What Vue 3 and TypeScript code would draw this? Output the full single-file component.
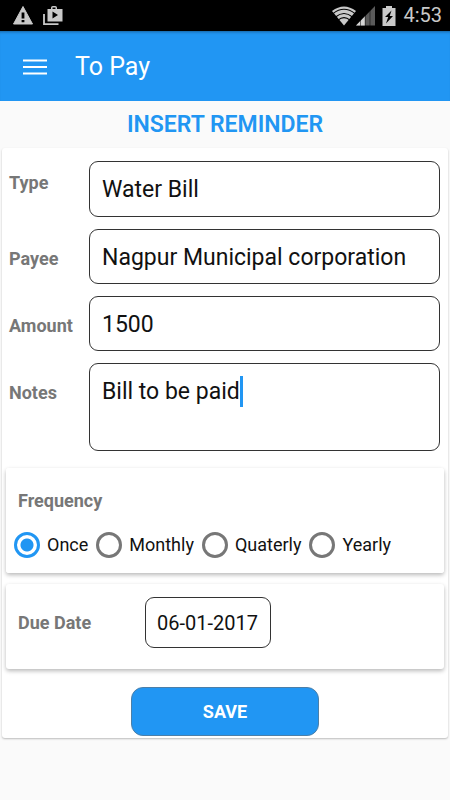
<script setup lang="ts">
import { ref } from 'vue'

interface Field {
  id: 'type' | 'payee' | 'amount'
  label: string
}

const fields: Field[] = [
  { id: 'type', label: 'Type' },
  { id: 'payee', label: 'Payee' },
  { id: 'amount', label: 'Amount' },
]

const form = ref({
  type: 'Water Bill',
  payee: 'Nagpur Municipal corporation',
  amount: '1500',
  notes: 'Bill to be paid',
})

const frequencies: string[] = ['Once', 'Monthly', 'Quaterly', 'Yearly']
const frequency = ref<string>('Once')
const dueDate = ref<string>('06-01-2017')
</script>

<template>
  <div class="screen">
    <div class="status">
      <div class="status-group status-left">
        <svg width="22" height="22" viewBox="0 0 22 22">
          <path d="M11 1.5 20.5 19h-19z" fill="#c9c9c9" stroke="#c9c9c9" stroke-linejoin="round" />
          <path d="M9.6 7.5h2.8v6H9.6zM9.6 15h2.8v2.300H9.6z" fill="#000" />
        </svg>
        <svg width="20" height="22" viewBox="0 0 20 22">
          <path d="M1 9v10.2h14.5" fill="none" stroke="#c9c9c9" stroke-width="1.8" />
          <path
            fill="#c9c9c9"
            fill-rule="evenodd"
            d="M4.5 4H8V2.8Q8 1 9.8 1h2.4Q14 1 14 2.8V4h5.5v12.500h-15zM9.500 4h3V2.500h-3zM9.500 6.500v7l5.500-3.500z"
          />
        </svg>
      </div>
      <div class="status-group status-right">
        <div class="signals">
          <svg width="24" height="20" viewBox="0 0 24 20">
            <path d="M0 5Q12-4 24 5L12 19.5z" fill="#c9c9c9" />
            <path
              d="M1 7.6Q12-1 23 7.600M3.500 11Q12 4 20.500 11M6 14.200Q12 9 18 14.200"
              fill="none"
              stroke="#000"
              stroke-width="1.1"
            />
          </svg>
          <svg width="19" height="20" viewBox="0 0 19 20">
            <path d="M0 19.5 19 0v19.5z" fill="#5a5a5a" />
            <path d="M0 19.5 9 10.3v9.200z" fill="#d5d5d5" />
            <path d="M4.5 0v20M9.2 0v20M14 0v20" stroke="#000" stroke-opacity=".5" />
          </svg>
        </div>
        <svg width="14" height="22" viewBox="0 0 14 22">
          <path d="M4 1h6v2h3.5v18H.5V3H4z" fill="#c9c9c9" />
          <path d="M9.5 5.5 3 12h3.200L4 18.500l7-7.500H7.700z" fill="#000" />
        </svg>
        <span class="clock">4:53</span>
      </div>
    </div>

    <header class="appbar">
      <button class="menu" type="button" aria-label="Menu">
        <svg width="24" height="16" viewBox="0 0 24 16">
          <path d="M0 1.5h24M0 8h24M0 14.5h24" stroke="#fff" stroke-width="2.2" />
        </svg>
      </button>
      <span class="title">To Pay</span>
    </header>

    <main>
      <h1>INSERT REMINDER</h1>
      <form class="card sheet" @submit.prevent>
        <div class="fields">
          <div v-for="f in fields" :key="f.id" class="row" :class="{ 'row-top': f.id === 'type' }">
            <label class="label" :for="f.id">{{ f.label }}</label>
            <input :id="f.id" v-model="form[f.id]" class="box" type="text" />
          </div>
          <div class="row">
            <label class="label" for="notes">Notes</label>
            <div class="box notes">
              <textarea id="notes" v-model="form.notes" rows="1"></textarea>
              <span class="caret"></span>
            </div>
          </div>
        </div>

        <fieldset class="card panel frequency">
          <legend class="label">Frequency</legend>
          <div class="options">
            <label v-for="f in frequencies" :key="f" class="option">
              <input v-model="frequency" type="radio" name="frequency" :value="f" />
              <span>{{ f }}</span>
            </label>
          </div>
        </fieldset>

        <div class="card panel due">
          <label class="label" for="due">Due Date</label>
          <input id="due" v-model="dueDate" class="box date" type="text" />
        </div>

        <button class="save" type="submit">SAVE</button>
      </form>
    </main>
  </div>
</template>

<style>
body {
  margin: 0;
  background: #fafafa;
}
</style>

<style scoped>
.screen {
  min-height: 100vh;
  background: #fafafa;
  color: #111;
  font-family: Roboto, 'Liberation Sans', sans-serif;
}

.screen * {
  box-sizing: border-box;
}

svg {
  display: block;
}

input,
textarea,
button {
  margin: 0;
  font-family: inherit;
  color: inherit;
}

.status {
  display: flex;
  align-items: center;
  justify-content: space-between;
  height: 31px;
  padding: 0 8px 0 12px;
  background: #000;
}

.status-group {
  display: flex;
  align-items: center;
}

.status-left {
  gap: 9px;
}

.status-right {
  gap: 7px;
}

.signals {
  display: flex;
}

.clock {
  color: #c9c9c9;
  font-size: 20px;
  line-height: 31px;
}

.appbar {
  display: flex;
  align-items: center;
  gap: 28px;
  height: 70px;
  padding: 2px 23px 0;
  background: #2196f3;
  box-shadow: inset 0 3px 3px -2px rgba(0, 0, 0, 0.35);
}

.menu {
  padding: 0;
  border: 0;
  background: none;
}

.title {
  color: #fff;
  font-size: 25px;
  line-height: 32px;
}

h1 {
  margin: 0;
  color: #2196f3;
  font-size: 23px;
  font-weight: 600;
  line-height: 47px;
  text-align: center;
}

.card {
  border-radius: 3px;
  background: #fff;
}

.sheet {
  display: flex;
  flex-direction: column;
  margin: 0 2px;
  padding: 13px 4px 2px;
  box-shadow: 0 1px 2px rgba(0, 0, 0, 0.25);
}

.fields {
  display: grid;
  gap: 12px;
  padding: 0 4px 0 3px;
}

.row {
  display: grid;
  grid-template-columns: 80px 1fr;
  align-items: baseline;
}

.row-top {
  align-items: start;
}

.row-top .label {
  padding-top: 10px;
}

.label {
  color: #777;
  font-size: 18px;
  font-weight: 700;
  line-height: 24px;
}

.box {
  width: 100%;
  height: 56px;
  padding: 1px 12px 0;
  border: 1px solid #333;
  border-radius: 9px;
  background: #fff;
  font-size: 23px;
  line-height: 32px;
}

.row + .row .box {
  height: 55px;
}

.row .box.notes {
  display: flex;
  align-items: flex-start;
  height: 88px;
  padding: 12px;
}

.notes textarea {
  field-sizing: content;
  height: 32px;
  padding: 0;
  border: 0;
  outline: 0;
  background: none;
  resize: none;
  overflow: hidden;
  font-size: 23px;
  line-height: 32px;
  caret-color: transparent;
}

.caret {
  width: 3px;
  height: 31px;
  background: #2196f3;
}

.panel {
  box-shadow: 0 2px 4px rgba(0, 0, 0, 0.28);
}

.frequency {
  min-width: 0;
  margin: 17px 0 0;
  padding: 21px 8px 14px;
  border: 0;
}

.frequency legend {
  float: left;
  width: 100%;
  padding: 0 4px;
}

.options {
  display: flex;
  clear: both;
  gap: 8px;
  padding-top: 18px;
}

.option {
  display: flex;
  align-items: center;
  gap: 7px;
  font-size: 18px;
  line-height: 28px;
}

.option input {
  appearance: none;
  width: 26px;
  height: 26px;
  border: 3px solid #777;
  border-radius: 50%;
}

.option input:checked {
  border-color: #2196f3;
  background: radial-gradient(circle, #2196f3 6px, transparent 7px);
}

.due {
  display: grid;
  grid-template-columns: 127px 126px;
  align-items: center;
  margin-top: 11px;
  padding: 13px 12px 21px;
}

.date {
  height: 51px;
  padding: 1px 11px 0;
  font-size: 20px;
}

.save {
  align-self: center;
  width: 188px;
  height: 49px;
  margin-top: 18px;
  border: 1px solid #4c7fa8;
  border-radius: 12px;
  background: #2196f3;
  color: #fff;
  font-size: 18px;
  font-weight: 700;
}
</style>
